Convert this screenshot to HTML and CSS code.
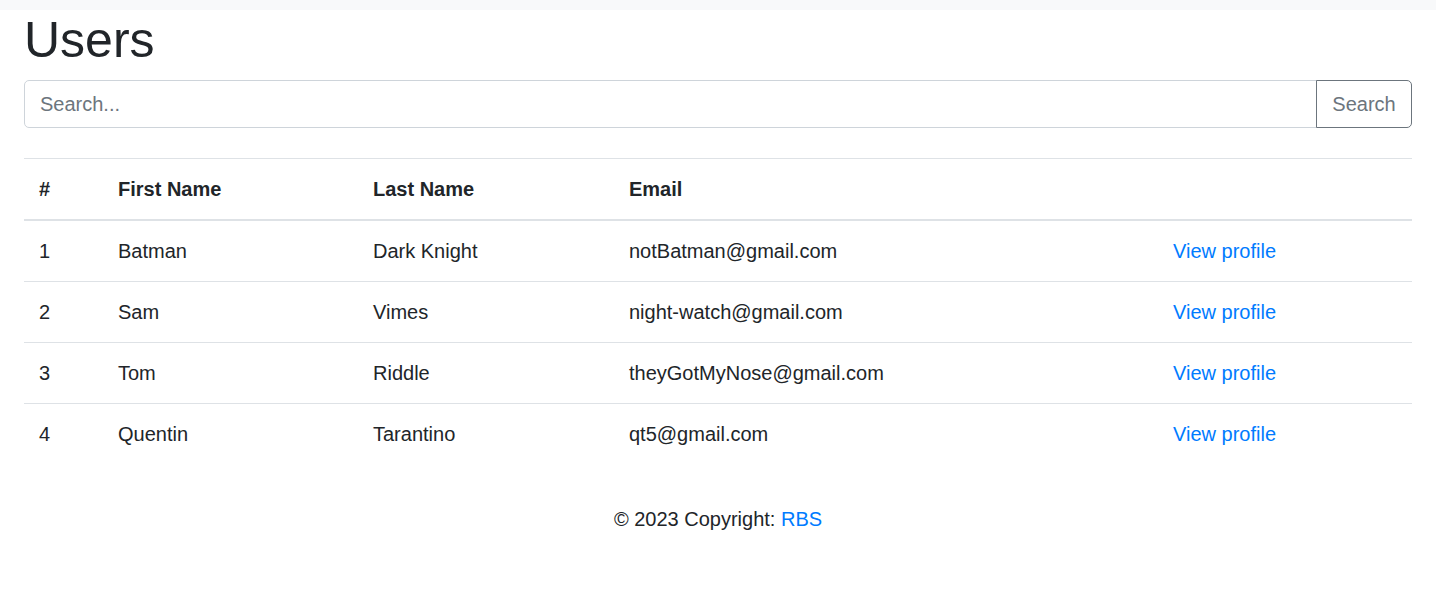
FILE: index.html
```html
<!DOCTYPE html>
<html lang="en">
<head>
<meta charset="utf-8">
<title>Users</title>
<link rel="stylesheet" href="styles.css">
</head>
<body>
<div class="topbar"></div>
<main class="container">
  <h1 class="title">Users</h1>
  <form class="search-group">
    <input class="search-input" type="text" placeholder="Search...">
    <button class="search-btn" type="button">Search</button>
  </form>
  <table class="users">
    <thead>
      <tr>
        <th class="c-num">#</th>
        <th class="c-first">First Name</th>
        <th class="c-last">Last Name</th>
        <th class="c-email">Email</th>
        <th class="c-act"></th>
      </tr>
    </thead>
    <tbody>
      <tr><td>1</td><td>Batman</td><td>Dark Knight</td><td>notBatman@gmail.com</td><td><a href="#">View profile</a></td></tr>
      <tr><td>2</td><td>Sam</td><td>Vimes</td><td>night-watch@gmail.com</td><td><a href="#">View profile</a></td></tr>
      <tr><td>3</td><td>Tom</td><td>Riddle</td><td>theyGotMyNose@gmail.com</td><td><a href="#">View profile</a></td></tr>
      <tr><td>4</td><td>Quentin</td><td>Tarantino</td><td>qt5@gmail.com</td><td><a href="#">View profile</a></td></tr>
    </tbody>
  </table>
</main>
<footer class="footer">© 2023 Copyright: <a href="#">RBS</a></footer>
</body>
</html>
```
FILE: styles.css
```css
* { box-sizing: border-box; }
html, body {
  margin: 0;
  padding: 0;
  background: #fff;
  color: #212529;
  font-family: "Liberation Sans", Arial, sans-serif;
  font-size: 20px;
  line-height: 1.5;
}
a { color: #007bff; text-decoration: none; }
.topbar {
  height: 10px;
  background: #f8f9fa;
}
.container {
  padding: 0 24px;
}
.title {
  margin: 0 0 10px 0;
  font-size: 50px;
  font-weight: 400;
  line-height: 1.2;
}
.search-group {
  display: flex;
  margin: 0 0 30px 0;
}
.search-input {
  flex: 1;
  height: 48px;
  padding: 6px 15px;
  font: inherit;
  color: #495057;
  border: 1px solid #ced4da;
  border-radius: 5px 0 0 5px;
  outline: none;
}
.search-input::placeholder { color: #6c757d; }
.search-btn {
  width: 96px;
  height: 48px;
  margin-left: -1px;
  font: inherit;
  color: #6c757d;
  background: #fff;
  border: 1px solid #6c757d;
  border-radius: 0 5px 5px 0;
  padding: 6px 15px;
}
.users {
  width: 100%;
  border-collapse: collapse;
  margin-bottom: 20px;
}
.users th, .users td {
  padding: 15px;
  text-align: left;
  vertical-align: top;
  border-top: 1px solid #dee2e6;
  line-height: 30px;
}
.users th { font-weight: 700; }
.users thead th { border-bottom: 2px solid #dee2e6; }
.c-num { width: 79px; }
.c-first { width: 255px; }
.c-last { width: 256px; }
.c-email { width: 544px; }
.footer {
  text-align: center;
  padding: 20px;
}
```
